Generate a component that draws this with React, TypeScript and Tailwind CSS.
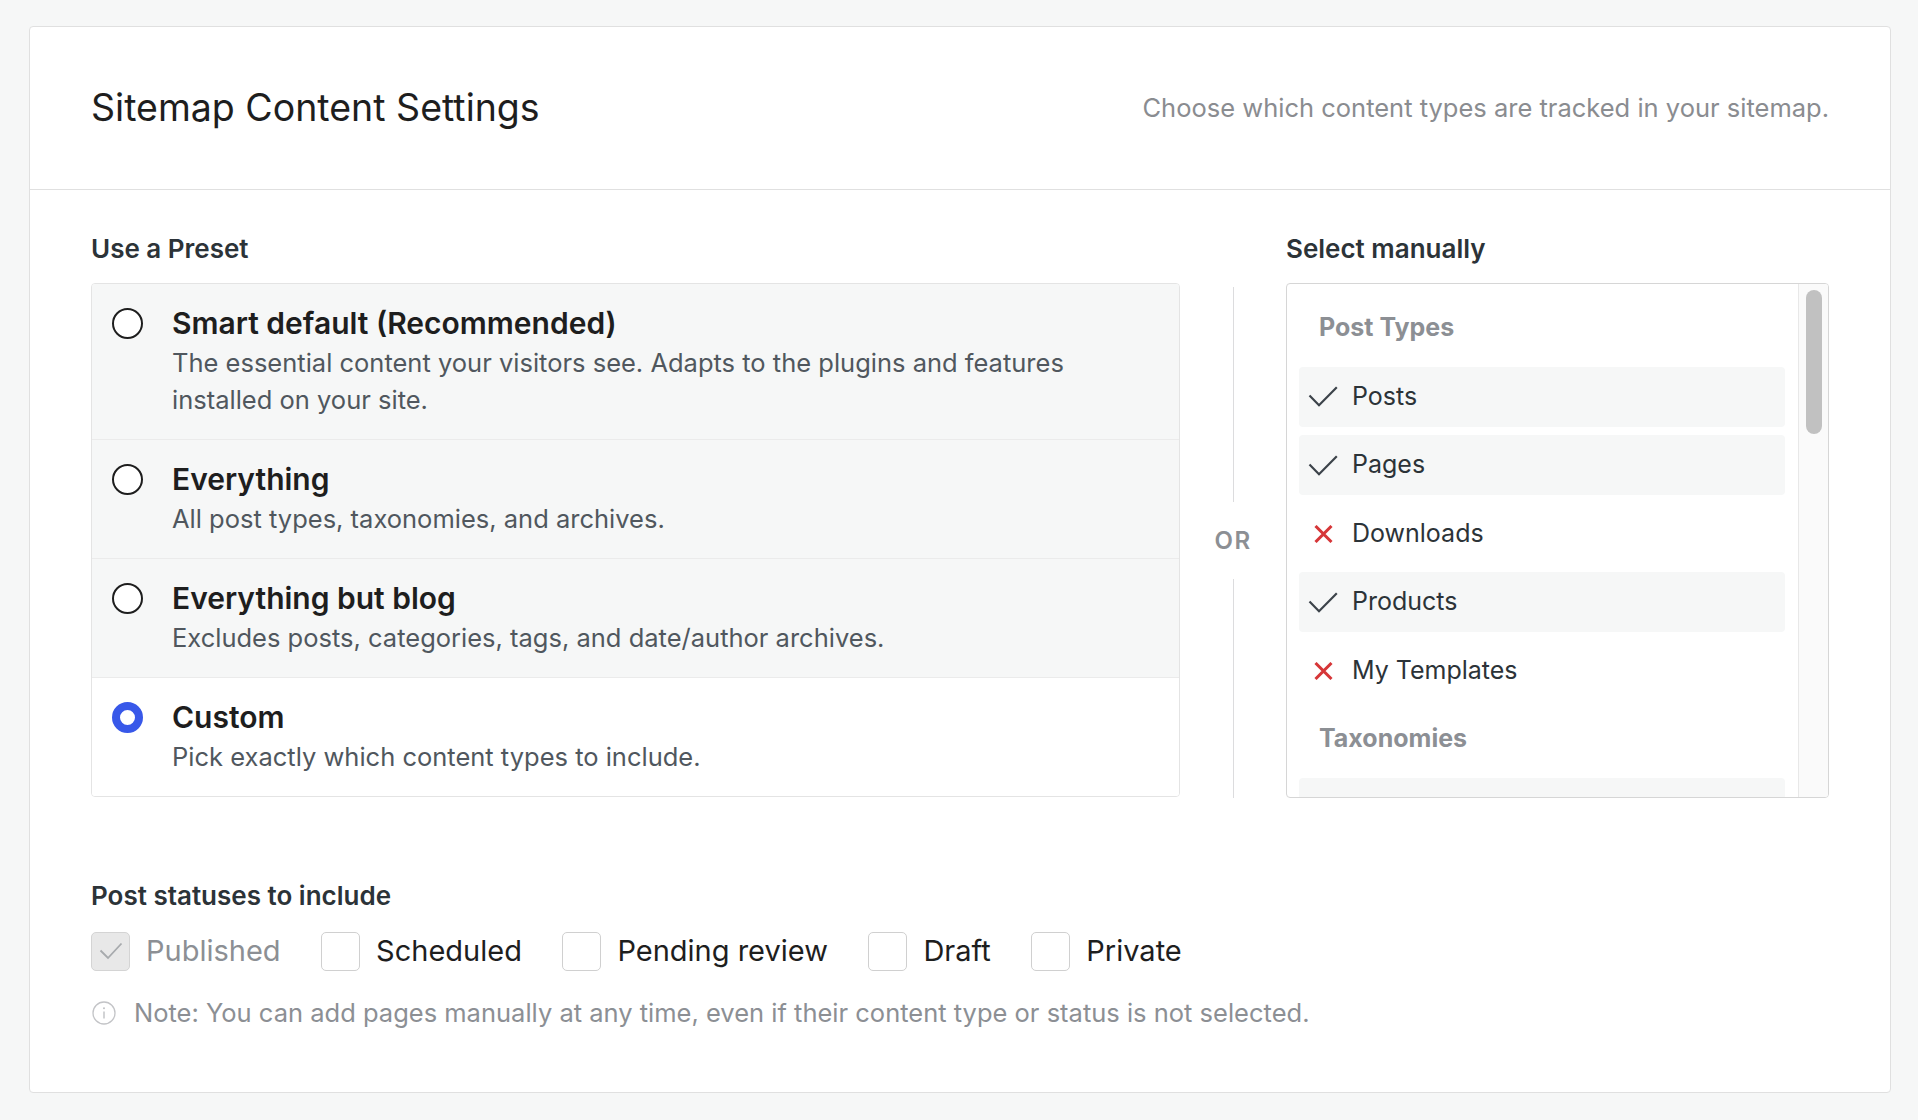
import type { ReactNode } from 'react'

type Preset = {
  title: string
  description: string
  selected?: boolean
}

const presets: Preset[] = [
  {
    title: 'Smart default (Recommended)',
    description:
      'The essential content your visitors see. Adapts to the plugins and features installed on your site.',
  },
  { title: 'Everything', description: 'All post types, taxonomies, and archives.' },
  {
    title: 'Everything but blog',
    description: 'Excludes posts, categories, tags, and date/author archives.',
  },
  { title: 'Custom', description: 'Pick exactly which content types to include.', selected: true },
]

type ListEntry =
  | { kind: 'header'; label: string }
  | { kind: 'item'; label: string; included: boolean }

const entries: ListEntry[] = [
  { kind: 'header', label: 'Post Types' },
  { kind: 'item', label: 'Posts', included: true },
  { kind: 'item', label: 'Pages', included: true },
  { kind: 'item', label: 'Downloads', included: false },
  { kind: 'item', label: 'Products', included: true },
  { kind: 'item', label: 'My Templates', included: false },
  { kind: 'header', label: 'Taxonomies' },
  { kind: 'item', label: 'Categories', included: true },
  { kind: 'item', label: 'Tags', included: true },
]

const statuses = [
  { label: 'Published', checked: true, disabled: true },
  { label: 'Scheduled' },
  { label: 'Pending review' },
  { label: 'Draft' },
  { label: 'Private' },
]

function CheckIcon() {
  return (
    <svg width="30" height="21" viewBox="0 0 30 21" fill="none" aria-hidden>
      <path d="M1.5 9.5 11 19.2 28.8 1.2" stroke="#3c434a" strokeWidth="2.2" strokeLinejoin="miter" />
    </svg>
  )
}

function CrossIcon() {
  return (
    <svg width="19" height="18" viewBox="0 0 19 18" fill="none" aria-hidden>
      <path d="M1.5 1 17.5 17M17.5 1 1.5 17" stroke="#d63638" strokeWidth="3" />
    </svg>
  )
}

function SectionLabel({ children }: { children: ReactNode }) {
  return <h2 className="text-[26px] leading-[32px] font-semibold text-[#2c3338]">{children}</h2>
}

function Radio({ selected }: { selected?: boolean }) {
  return selected ? (
    <span className="mt-[2.5px] block h-[31px] w-[31px] shrink-0 rounded-full border-[8.5px] border-[#3858e9] bg-white" />
  ) : (
    <span className="mt-[2.5px] block h-[31px] w-[31px] shrink-0 rounded-full border-2 border-[#1e1e1e] bg-white" />
  )
}

export default function App() {
  return (
    <div className="min-h-screen bg-[#f6f7f7] pl-[29px] pr-[27px] pt-[26px] pb-[27px] font-['Inter',sans-serif] antialiased">
      <div className="rounded-[4px] border border-[#e0e0e0] bg-white">
        {/* Header */}
        <header className="flex h-[163px] items-center justify-between border-b border-[#e0e0e0] px-[61px]">
          <h1 className="text-[37.5px] leading-[44px] text-[#1e1e1e]">Sitemap Content Settings</h1>
          <p className="text-[25.5px] leading-[32px] text-[#8a8c90]">
            Choose which content types are tracked in your sitemap.
          </p>
        </header>

        <div className="px-[61px] pt-[43px] pb-[61px]">
          <div className="flex">
            {/* Presets */}
            <div className="w-[1089px]">
              <SectionLabel>Use a Preset</SectionLabel>
              <div className="mt-[18px] overflow-hidden rounded-[4px] border border-[#e4e4e4]">
                {presets.map((p, i) => (
                  <label
                    key={p.title}
                    className={`flex gap-[29px] pl-[20px] pr-[40px] pt-[21px] pb-[21px] ${
                      i > 0 ? 'border-t border-[#ebebeb]' : ''
                    } ${p.selected ? 'bg-white' : 'bg-[#f6f7f7]'}`}
                  >
                    <Radio selected={p.selected} />
                    <div>
                      <div className="text-[30px] leading-[36px] font-semibold text-[#1e1e1e]">{p.title}</div>
                      <div className="mt-[3px] text-[25.5px] leading-[37px] text-[#50575e]">{p.description}</div>
                    </div>
                  </label>
                ))}
              </div>
            </div>

            {/* OR divider */}
            <div className="flex w-[106px] flex-col items-center pt-[54px]">
              <div className="h-[215px] w-px bg-[#dcdcde]" />
              <div className="mt-[23px] mb-[22px] text-[24px] leading-[32px] font-semibold tracking-[0.06em] text-[#8c8f94]">
                OR
              </div>
              <div className="w-px flex-1 bg-[#dcdcde]" />
            </div>

            {/* Manual selection */}
            <div className="w-[543px]">
              <SectionLabel>Select manually</SectionLabel>
              <div className="mt-[18px] flex h-[515px] overflow-hidden rounded-[4px] border border-[#d6d6d6]">
                <div className="flex flex-1 flex-col gap-[8.5px] pt-[14px] pl-[12px] pr-[13px]">
                  {entries.map((e) =>
                    e.kind === 'header' ? (
                      <div
                        key={e.label}
                        className="flex h-[60px] shrink-0 items-center pl-[20px] text-[25px] font-bold text-[#8c8f94]"
                      >
                        {e.label}
                      </div>
                    ) : (
                      <div
                        key={e.label}
                        className={`flex h-[60px] shrink-0 items-center rounded-[4px] px-[6px] ${
                          e.included ? 'bg-[#f6f7f7]' : ''
                        }`}
                      >
                        <span className="flex w-[36px] justify-center">
                          {e.included ? <CheckIcon /> : <CrossIcon />}
                        </span>
                        <span className="ml-[11px] text-[25px] text-[#2c3338]">{e.label}</span>
                      </div>
                    ),
                  )}
                </div>
                {/* Scrollbar */}
                <div className="w-[30px] shrink-0 border-l border-[#e8e8e8] bg-[#fafafa] pt-[6px]">
                  <div className="mx-auto h-[144px] w-[16px] rounded-full bg-[#c1c1c1]" />
                </div>
              </div>
            </div>
          </div>

          {/* Post statuses */}
          <div className="mt-[82px]">
            <SectionLabel>Post statuses to include</SectionLabel>
            <div className="mt-[19px] flex items-center gap-[40.5px]">
              {statuses.map((s) => (
                <label key={s.label} className="flex items-center gap-[16px]">
                  <span
                    className={`flex h-[39px] w-[39px] items-center justify-center rounded-[5px] border ${
                      s.disabled ? 'border-[#d4d4d4] bg-[#e8e8e8]' : 'border-[#d0d0d0] bg-white'
                    }`}
                  >
                    {s.checked && (
                      <svg width="24" height="18" viewBox="0 0 24 18" fill="none" aria-hidden>
                        <path d="M1.5 8.5 9 16 22.5 1.5" stroke="#a7aaad" strokeWidth="1.8" />
                      </svg>
                    )}
                  </span>
                  <span
                    className={`text-[29px] leading-[40px] ${s.disabled ? 'text-[#8c8f94]' : 'text-[#1e1e1e]'}`}
                  >
                    {s.label}
                  </span>
                </label>
              ))}
            </div>
            <p className="mt-[24px] flex items-center gap-[18px] text-[25.5px] leading-[36px] text-[#8c8f94]">
              <svg width="24" height="24" viewBox="0 0 24 24" fill="none" aria-hidden className="ml-[1px]">
                <circle cx="12" cy="12" r="11" stroke="#c3c4c7" strokeWidth="1.3" />
                <path d="M12 10.5v7" stroke="#c3c4c7" strokeWidth="1.5" />
                <circle cx="12" cy="7.2" r="1.05" fill="#c3c4c7" />
              </svg>
              Note: You can add pages manually at any time, even if their content type or status is not selected.
            </p>
          </div>
        </div>
      </div>
    </div>
  )
}
